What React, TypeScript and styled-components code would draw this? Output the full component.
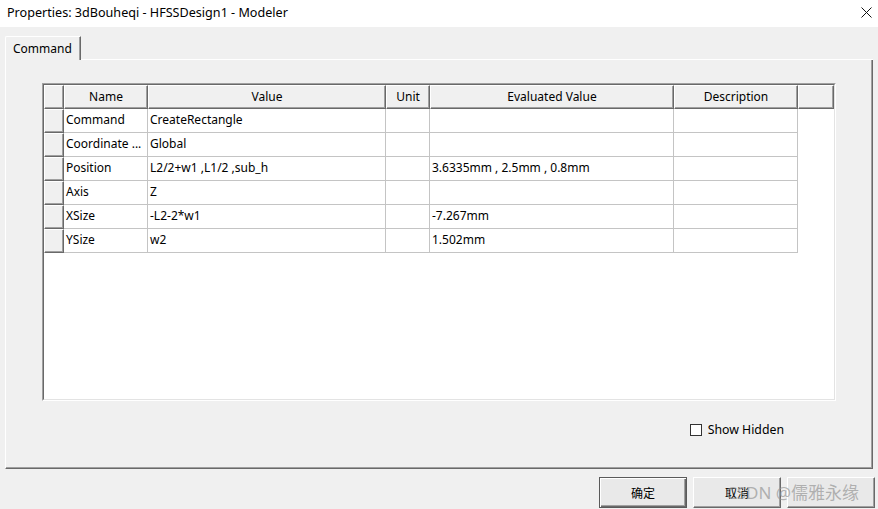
import React from "react";
import styled, { createGlobalStyle } from "styled-components";

const Global = createGlobalStyle`
  html, body { margin: 0; padding: 0; background: #f0f0f0; }
  body { font-family: "Noto Sans", "Noto Sans CJK SC", sans-serif; font-size: 12px; color: #000; }
  * { box-sizing: border-box; }
`;

const Window = styled.div`
  position: relative;
  width: 878px;
  height: 509px;
  overflow: hidden;
  display: flex;
  flex-direction: column;
  background: #f0f0f0;
`;

const TitleBar = styled.div`
  height: 27px;
  flex: none;
  background: #fff;
  display: flex;
  align-items: center;
  justify-content: space-between;
  padding: 0 6px 2px 7px;
  font-size: 12.6px;
  color: #000;
`;

const CloseBox = styled.div`
  width: 12px;
  height: 12px;
  display: flex;
  align-items: center;
  justify-content: center;
`;

const Body = styled.div`
  display: flex;
  flex-direction: column;
  padding: 9px 5px 0 5px;
`;

const TabStrip = styled.div`
  display: flex;
  height: 24px;
`;

const Tab = styled.div`
  width: 76px;
  height: 24px;
  border-top: 1px solid #fff;
  border-left: 1px solid #fff;
  border-right: 1px solid #696969;
  box-shadow: inset -1px 0 0 #a0a0a0;
  border-top-left-radius: 2px;
  display: flex;
  align-items: center;
  padding: 0 0 1px 7px;
  font-size: 12px;
`;

const TabFiller = styled.div`
  flex: 1;
  border-bottom: 1px solid #fff;
`;

const Panel = styled.div`
  height: 409px;
  border-left: 1px solid #fff;
  border-right: 1px solid #696969;
  border-bottom: 1px solid #696969;
  box-shadow: inset -1px -1px 0 #a0a0a0;
  padding: 23px 0 0 36px;
  display: flex;
  flex-direction: column;
`;

const TableFrame = styled.div`
  width: 794px;
  height: 318px;
  border: 1px solid;
  border-color: #a0a0a0 #fff #fff #a0a0a0;
`;

const TableInner = styled.div`
  width: 100%;
  height: 100%;
  border: 1px solid;
  border-color: #696969 #e3e3e3 #e3e3e3 #696969;
  background: #fff;
`;

const COLS = "20px 84px 238px 44px 244px 124px 1fr";

const HeaderRow = styled.div`
  display: grid;
  grid-template-columns: ${COLS};
  height: 24px;
  background: #f0f0f0;
`;

const HeadCell = styled.div`
  border-top: 1px solid #fff;
  border-left: 1px solid #fff;
  border-right: 1px solid #696969;
  border-bottom: 1px solid #696969;
  box-shadow: inset -1px -1px 0 #a0a0a0;
  display: flex;
  align-items: center;
  justify-content: center;
  font-size: 12px;
  padding-bottom: 2px;
  white-space: nowrap;
`;

const Row = styled.div`
  display: grid;
  grid-template-columns: ${COLS};
  height: 24px;
`;

const RowHead = styled.div`
  background: #f0f0f0;
  border-top: 1px solid #fff;
  border-left: 1px solid #fff;
  border-right: 1px solid #696969;
  border-bottom: 1px solid #696969;
  box-shadow: inset -1px -1px 0 #a0a0a0;
`;

const Cell = styled.div`
  border-right: 1px solid #c4c4c4;
  border-bottom: 1px solid #c4c4c4;
  display: flex;
  align-items: center;
  padding: 0 0 2px 2px;
  font-size: 12px;
  white-space: nowrap;
  overflow: hidden;
`;

const Blank = styled.div``;

const OptionsRow = styled.div`
  display: flex;
  justify-content: flex-end;
  align-items: center;
  margin-top: 20px;
  padding-right: 88px;
  gap: 6px;
  font-size: 12.3px;
`;

const CheckBox = styled.span`
  width: 12px;
  height: 12px;
  border: 1px solid #333;
  background: #fff;
  display: inline-block;
`;

const ButtonRow = styled.div`
  display: flex;
  justify-content: flex-end;
  gap: 6px;
  margin-top: 8px;
  margin-right: -2px;
`;

const Button = styled.div<{ $default?: boolean }>`
  width: 88px;
  height: 31px;
  background: #e9e9e9;
  border: 1px solid;
  border-color: ${(p) => (p.$default ? "#5a5a5a" : "#fff #696969 #696969 #fff")};
  box-shadow: ${(p) =>
    p.$default
      ? "inset 1px 1px 0 #fff, inset -1px -1px 0 #696969, inset -2px -2px 0 #a0a0a0"
      : "inset -1px -1px 0 #a0a0a0"};
  display: flex;
  align-items: center;
  justify-content: center;
  font-family: "Noto Sans CJK SC", sans-serif;
  font-size: 12px;
  padding-bottom: 1px;
`;

const Watermark = styled.div`
  position: absolute;
  left: 726px;
  top: 479px;
  font-family: "Noto Sans", "Noto Sans CJK SC", sans-serif;
  font-size: 17px;
  color: rgba(150, 150, 150, 0.7);
  white-space: nowrap;
  pointer-events: none;
`;

const rows: [string, string, string][] = [
  ["Command", "CreateRectangle", ""],
  ["Coordinate ...", "Global", ""],
  ["Position", "L2/2+w1 ,L1/2 ,sub_h", "3.6335mm , 2.5mm , 0.8mm"],
  ["Axis", "Z", ""],
  ["XSize", "-L2-2*w1", "-7.267mm"],
  ["YSize", "w2", "1.502mm"],
];

export default function App() {
  return (
    <Window>
      <Global />
      <TitleBar>
        <span>Properties: 3dBouheqi - HFSSDesign1 - Modeler</span>
        <CloseBox>
          <svg width="11" height="11" viewBox="0 0 11 11">
            <path d="M0.5 0.5 L10.5 10.5 M10.5 0.5 L0.5 10.5" stroke="#111" strokeWidth="1" fill="none" />
          </svg>
        </CloseBox>
      </TitleBar>
      <Body>
        <TabStrip>
          <Tab>Command</Tab>
          <TabFiller />
        </TabStrip>
        <Panel>
          <TableFrame>
            <TableInner>
              <HeaderRow>
                <HeadCell />
                <HeadCell>Name</HeadCell>
                <HeadCell>Value</HeadCell>
                <HeadCell>Unit</HeadCell>
                <HeadCell>Evaluated Value</HeadCell>
                <HeadCell>Description</HeadCell>
                <HeadCell />
              </HeaderRow>
              {rows.map(([n, v, e]) => (
                <Row key={n}>
                  <RowHead />
                  <Cell>{n}</Cell>
                  <Cell>{v}</Cell>
                  <Cell />
                  <Cell>{e}</Cell>
                  <Cell />
                  <Blank />
                </Row>
              ))}
            </TableInner>
          </TableFrame>
          <OptionsRow>
            <CheckBox />
            <span>Show Hidden</span>
          </OptionsRow>
        </Panel>
        <ButtonRow>
          <Button $default>确定</Button>
          <Button>取消</Button>
          <Button />
        </ButtonRow>
      </Body>
      <Watermark>CSDN @儒雅永缘</Watermark>
    </Window>
  );
}
